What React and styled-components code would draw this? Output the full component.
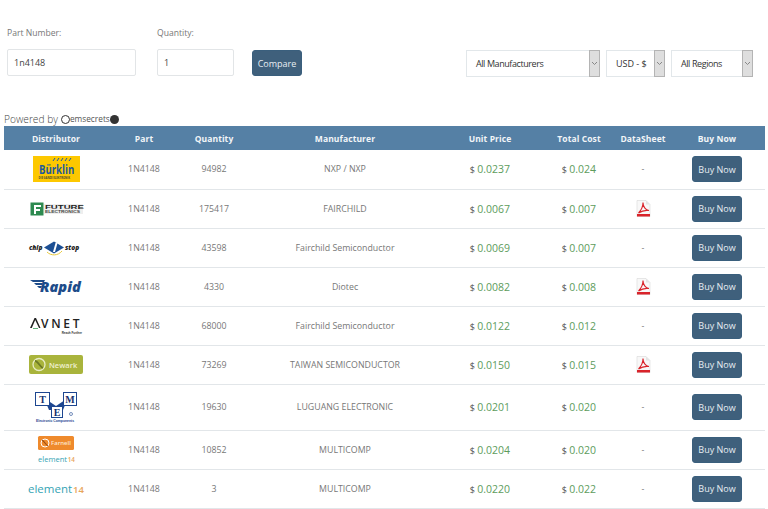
import React from 'react';
import styled, { createGlobalStyle } from 'styled-components';

const Global = createGlobalStyle`
  html, body { margin: 0; padding: 0; background: #fff; overflow: hidden; }
  body { font-family: "Open Sans", "Liberation Sans", sans-serif; color: #555; }
`;
const Page = styled.div`width: 768px; height: 509px; overflow: hidden; display: flex; flex-direction: column;`;
const Form = styled.form`display: flex; align-items: flex-start; height: 112px; box-sizing: border-box; padding: 27px 15px 0 7px;`;
const Field = styled.div`display: flex; flex-direction: column; width: ${p => p.$w}px; margin-right: ${p => p.$mr}px;`;
const Label = styled.label`font-size: 8.6px; line-height: 13px; color: #777; margin-bottom: 9px;`;
const Input = styled.input`
  height: 27px; box-sizing: border-box; width: 100%; border: 1px solid #e2e5e7; border-radius: 2px;
  padding: 0 6px; font: 9px "Open Sans", sans-serif; color: #444; outline: none; background: #fff;
`;
const Compare = styled.button`
  margin-top: 23px; width: 50px; height: 26px; border: 1px solid #3a5f7d; border-radius: 3px; padding: 0;
  background: #3f607c; color: #e8eef3; font: 400 9px "Open Sans", sans-serif;
`;
const Selects = styled.div`display: flex; gap: 6px; margin: 23px 0 0 auto;`;
const Select = styled.div`
  width: ${p => p.$w}px; height: 27px; box-sizing: border-box; border: 1px solid #e2e7ea; display: flex;
  align-items: center; justify-content: space-between; padding-left: 9px; font-size: 9px; color: #333; background: #fff;
  letter-spacing: ${p => (p.$tight ? '-.42px' : '0')};
`;
const Arrow = styled.span`
  width: 11px; height: 27px; box-sizing: border-box; margin: -1px -1px -1px 0; border: 1px solid #b4b4b4;
  background: #dedede; display: flex; align-items: center; justify-content: center; flex: none;
`;
const Powered = styled.div`
  height: 14px; padding-left: 4px; display: flex; align-items: center; font-size: 10.2px; font-weight: 300; color: #444; line-height: 14px;
`;
const Brand = styled.span`display: inline-flex; align-items: center; margin-left: 3px; font-size: 8.3px; font-weight: 400; color: #555;`;
const Ring = styled.i`width: 7px; height: 7px; border: 1px solid #333; border-radius: 50%; display: block; margin-right: 0;`;
const Dot = styled.i`width: 9px; height: 9px; background: #333; border-radius: 50%; display: block;`;
const Table = styled.table`
  width: 761px; margin-left: 4px; border-collapse: collapse; table-layout: fixed; flex: none;
`;
const Head = styled.th`
  height: 24px; padding: 0 0 0 ${p => p.$pad || 0}px; background: #5580a5; color: #f2f5f8; font-size: 8.5px; font-weight: 700;
  text-align: center; letter-spacing: .1px;
`;
const Row = styled.tr`height: ${p => p.$h || 39}px; border-bottom: 1px solid #e2e6e9;`;
const Cell = styled.td`
  padding: 0 0 0 ${p => p.$pad || 0}px; text-align: center; font-size: 8.8px; color: #777; vertical-align: middle;
`;
const LogoWrap = styled.div`
  display: flex; flex-direction: column; align-items: center; justify-content: center; gap: ${p => p.$gap || 0}px;
  svg { overflow: visible; }
`;
const Dollar = styled.span`font-size: 9px; color: #555;`;
const Price = styled.span`font-size: 10.5px; color: #5d9c5c;`;
const Buy = styled.button`
  width: 50px; height: 26px; border: 1px solid #3a5f7d; border-radius: 3px; padding: 0; background: #3f607c;
  color: #e8eef3; font: 400 9px "Open Sans", sans-serif; vertical-align: middle;
`;

const Chevron = () => (
  <svg width="7" height="5" viewBox="0 0 7 5"><path d="M1 1l2.5 2.5L6 1" fill="none" stroke="#888" strokeWidth="1" /></svg>
);

const Pdf = () => (
  <svg width="15" height="17" viewBox="0 0 15 17" style={{ display: 'block', margin: '0 auto' }}>
    <path d="M1 .5h9l4 4v12H1z" fill="#f8f8f8" stroke="#d8d8d8" strokeWidth=".6" />
    <path d="M10 .5v4h4" fill="#e4e4e4" />
    <path d="M2.5 13C5 10.500 7 6.500 7 2.500 7 6.500 9.500 10 13 10.500 9.500 10 5.500 11 2.500 13z" fill="none" stroke="#d9232a" strokeWidth="1.100" />
    <rect x="1" y="14" width="13" height="2.500" fill="#d9232a" />
  </svg>
);

const Burklin = () => (
  <svg width="47" height="26" viewBox="0 0 47 26">
    <rect width="47" height="26" fill="#fdc800" />
    <path d="M20 5l2-3M24 5l2-3M28 5l2-3M32 5l2-3M36 5l2-3" stroke="#1d5a9c" strokeWidth="1" />
    <text transform="translate(6 17.500) scale(.8 1)" fontFamily="Open Sans" fontWeight="700" fontSize="12" fill="#1d5a9c">Bürklin</text>
    <text x="5.500" y="22.800" fontFamily="Open Sans" fontWeight="700" fontSize="2.700" fill="#4a4a30">DIE GANZE ELEKTRONIK</text>
  </svg>
);
const Future = () => (
  <svg width="53" height="14" viewBox="0 0 53 14">
    <rect x=".5" y=".5" width="13" height="13" fill="#2d8a50" />
    <path d="M4 3h7v2H6v2h4v2H6v3H4z" fill="#fff" />
    <rect x="14" y="2" width="39" height="10" fill="#eeeeee" />
    <text transform="translate(15 6.800) scale(1.600 1)" fontFamily="Liberation Sans" fontWeight="700" fontSize="6" fill="#222">FUTURE</text>
    <text transform="translate(15 11.300) scale(1.400 1)" fontFamily="Liberation Sans" fontWeight="700" fontSize="3.500" fill="#444">ELECTRONICS</text>
  </svg>
);
const ChipOne = () => (
  <svg width="54" height="18" viewBox="0 0 54 18">
    <text x="0" y="11" fontFamily="Open Sans" fontStyle="italic" fontWeight="800" fontSize="6.500" fill="#222">chip</text>
    <path d="M15 8.500l10-6 10 6-10 6z" fill="#1c4f94" />
    <path d="M24 13l2.500-9h2l-2.500 9z" fill="#fff" />
    <path d="M18 13c4 4 11 4 15-1" fill="none" stroke="#e8c93a" strokeWidth="1" />
    <text x="36" y="11" fontFamily="Open Sans" fontStyle="italic" fontWeight="800" fontSize="6.500" fill="#222">stop</text>
  </svg>
);
const Rapid = () => (
  <svg width="53" height="15" viewBox="0 0 53 15">
    <path d="M0 1h15l-1 2H3zM4 4h9l-1 2H6zM7 7h5l-1 2H9z" fill="#1d4c8a" />
    <text transform="translate(10 13) scale(1.080 1)" fontFamily="Open Sans" fontStyle="italic" fontWeight="800" fontSize="13.500" fill="#1d4c8a">Rapid</text>
  </svg>
);
const Avnet = () => (
  <svg width="53" height="18" viewBox="0 0 53 18">
    <path d="M0 11L4.500 1h1.500l4.500 10H9L5.200 3 1.800 11z" fill="#222" />
    <path d="M3 11.500h5" stroke="#3a9a5a" strokeWidth=".8" />
    <text x="11" y="11" fontFamily="Open Sans" fontWeight="600" fontSize="12" letterSpacing="2.700" fill="#222">VNET</text>
    <text x="52" y="16.500" textAnchor="end" fontFamily="Liberation Sans" fontWeight="700" fontSize="3" fill="#333">Reach Further</text>
  </svg>
);
const Newark = () => (
  <svg width="54" height="19" viewBox="0 0 54 19">
    <rect width="54" height="19" rx="2" fill="#a9b43c" />
    <circle cx="10" cy="9.500" r="6" fill="none" stroke="#e8ecc5" strokeWidth="1.300" />
    <path d="M6 6c3 0 5 6 8 7" stroke="#6d7a26" strokeWidth="1.800" fill="none" />
    <text x="20" y="12.500" fontFamily="Open Sans" fontWeight="600" fontSize="7.500" fill="#eef0d0">Newark</text>
  </svg>
);
const Tme = () => (
  <svg width="42" height="30" viewBox="0 0 42 30">
    <path d="M9 6l12 8 12-8-5 12H14z" fill="#1d4690" />
    <rect x=".5" y=".5" width="14" height="13" fill="#fff" stroke="#1d4690" />
    <rect x="28.500" y=".5" width="13" height="13" fill="#fff" stroke="#1d4690" />
    <rect x="16.500" y="14.500" width="11" height="11" fill="#fff" stroke="#1d4690" />
    <text x="7.500" y="10.500" textAnchor="middle" fontFamily="Liberation Serif" fontWeight="700" fontSize="10" fill="#14306e">T</text>
    <text x="35" y="10.500" textAnchor="middle" fontFamily="Liberation Serif" fontWeight="700" fontSize="10" fill="#14306e">M</text>
    <text x="22" y="23.500" textAnchor="middle" fontFamily="Liberation Serif" fontWeight="700" fontSize="10" fill="#14306e">E</text>
    <circle cx="36" cy="22" r="1.500" fill="none" stroke="#1d4690" strokeWidth=".6" />
    <text x="1" y="29.500" fontFamily="Liberation Sans" fontWeight="700" fontSize="3.400" fill="#1d4690">Electronic Components</text>
  </svg>
);
const Element = ({ w, h }) => (
  <svg width={w} height={h} viewBox="0 0 56 12">
    <text x="0" y="10" fontFamily="Open Sans" fontSize="11.500" fontWeight="400" fill="#35a3b4">element</text>
    <text x="45" y="10" fontFamily="Open Sans" fontSize="9.500" fontWeight="600" fill="#e8a45a">14</text>
  </svg>
);
const Farnell = () => (
  <svg width="36" height="14" viewBox="0 0 36 14">
    <rect width="36" height="14" rx="1.500" fill="#ef8a2c" />
    <circle cx="7" cy="7" r="4" fill="none" stroke="#fff" strokeWidth="1" />
    <path d="M4 4c2 1 4 5 6 6" stroke="#9a4d12" strokeWidth="1.200" fill="none" />
    <text x="13" y="9.300" fontFamily="Open Sans" fontWeight="600" fontSize="6" fill="#fde6cc">Farnell</text>
  </svg>
);
const FarnellStack = () => (
  <LogoWrap $gap={5}>
    <Farnell />
    <Element w={37} h={8} />
  </LogoWrap>
);

const columns = [
  ['Distributor', 104], ['Part', 72], ['Quantity', 68], ['Manufacturer', 194],
  ['Unit Price', 96], ['Total Cost', 82], ['DataSheet', 46], ['Buy Now', 99],
];

const rows = [
  [<Burklin />, 94982, 'NXP / NXP', '0.0237', '0.024', false],
  [<Future />, 175417, 'FAIRCHILD', '0.0067', '0.007', true],
  [<ChipOne />, 43598, 'Fairchild Semiconductor', '0.0069', '0.007', false],
  [<Rapid />, 4330, 'Diotec', '0.0082', '0.008', true],
  [<Avnet />, 68000, 'Fairchild Semiconductor', '0.0122', '0.012', false],
  [<Newark />, 73269, 'TAIWAN SEMICONDUCTOR', '0.0150', '0.015', true],
  [<Tme />, 19630, 'LUGUANG ELECTRONIC', '0.0201', '0.020', false, 46],
  [<FarnellStack />, 10852, 'MULTICOMP', '0.0204', '0.020', false],
  [<Element w={56} h={12} />, 3, 'MULTICOMP', '0.0220', '0.022', false],
];

export default function App() {
  return (
    <Page>
      <Global />
      <Form onSubmit={e => e.preventDefault()}>
        <Field $w={129} $mr={21}>
          <Label>Part Number:</Label>
          <Input defaultValue="1n4148" />
        </Field>
        <Field $w={77} $mr={18}>
          <Label>Quantity:</Label>
          <Input defaultValue="1" />
        </Field>
        <Compare type="button">Compare</Compare>
        <Selects>
          <Select $w={134} $tight>All Manufacturers<Arrow><Chevron /></Arrow></Select>
          <Select $w={59}>USD - $<Arrow><Chevron /></Arrow></Select>
          <Select $w={82} $tight>All Regions<Arrow><Chevron /></Arrow></Select>
        </Selects>
      </Form>
      <Powered>
        Powered by
        <Brand><Ring />emsecrets<Dot /></Brand>
      </Powered>
      <Table>
        <colgroup>
          {columns.map(([n, w]) => <col key={n} width={w} />)}
        </colgroup>
        <thead>
          <tr>{columns.map(([n], i) => <Head key={n} $pad={i === 7 ? 3 : 0}>{n}</Head>)}</tr>
        </thead>
        <tbody>
          {rows.map(([logo, qty, mfr, unit, total, pdf, h], i) => (
            <Row key={i} $h={h}>
              <Cell><LogoWrap>{logo}</LogoWrap></Cell>
              <Cell>1N4148</Cell>
              <Cell>{qty}</Cell>
              <Cell>{mfr}</Cell>
              <Cell><Dollar>$ </Dollar><Price>{unit}</Price></Cell>
              <Cell><Dollar>$ </Dollar><Price>{total}</Price></Cell>
              <Cell>{pdf ? <Pdf /> : '-'}</Cell>
              <Cell $pad={3}><Buy type="button">Buy Now</Buy></Cell>
            </Row>
          ))}
        </tbody>
      </Table>
    </Page>
  );
}
